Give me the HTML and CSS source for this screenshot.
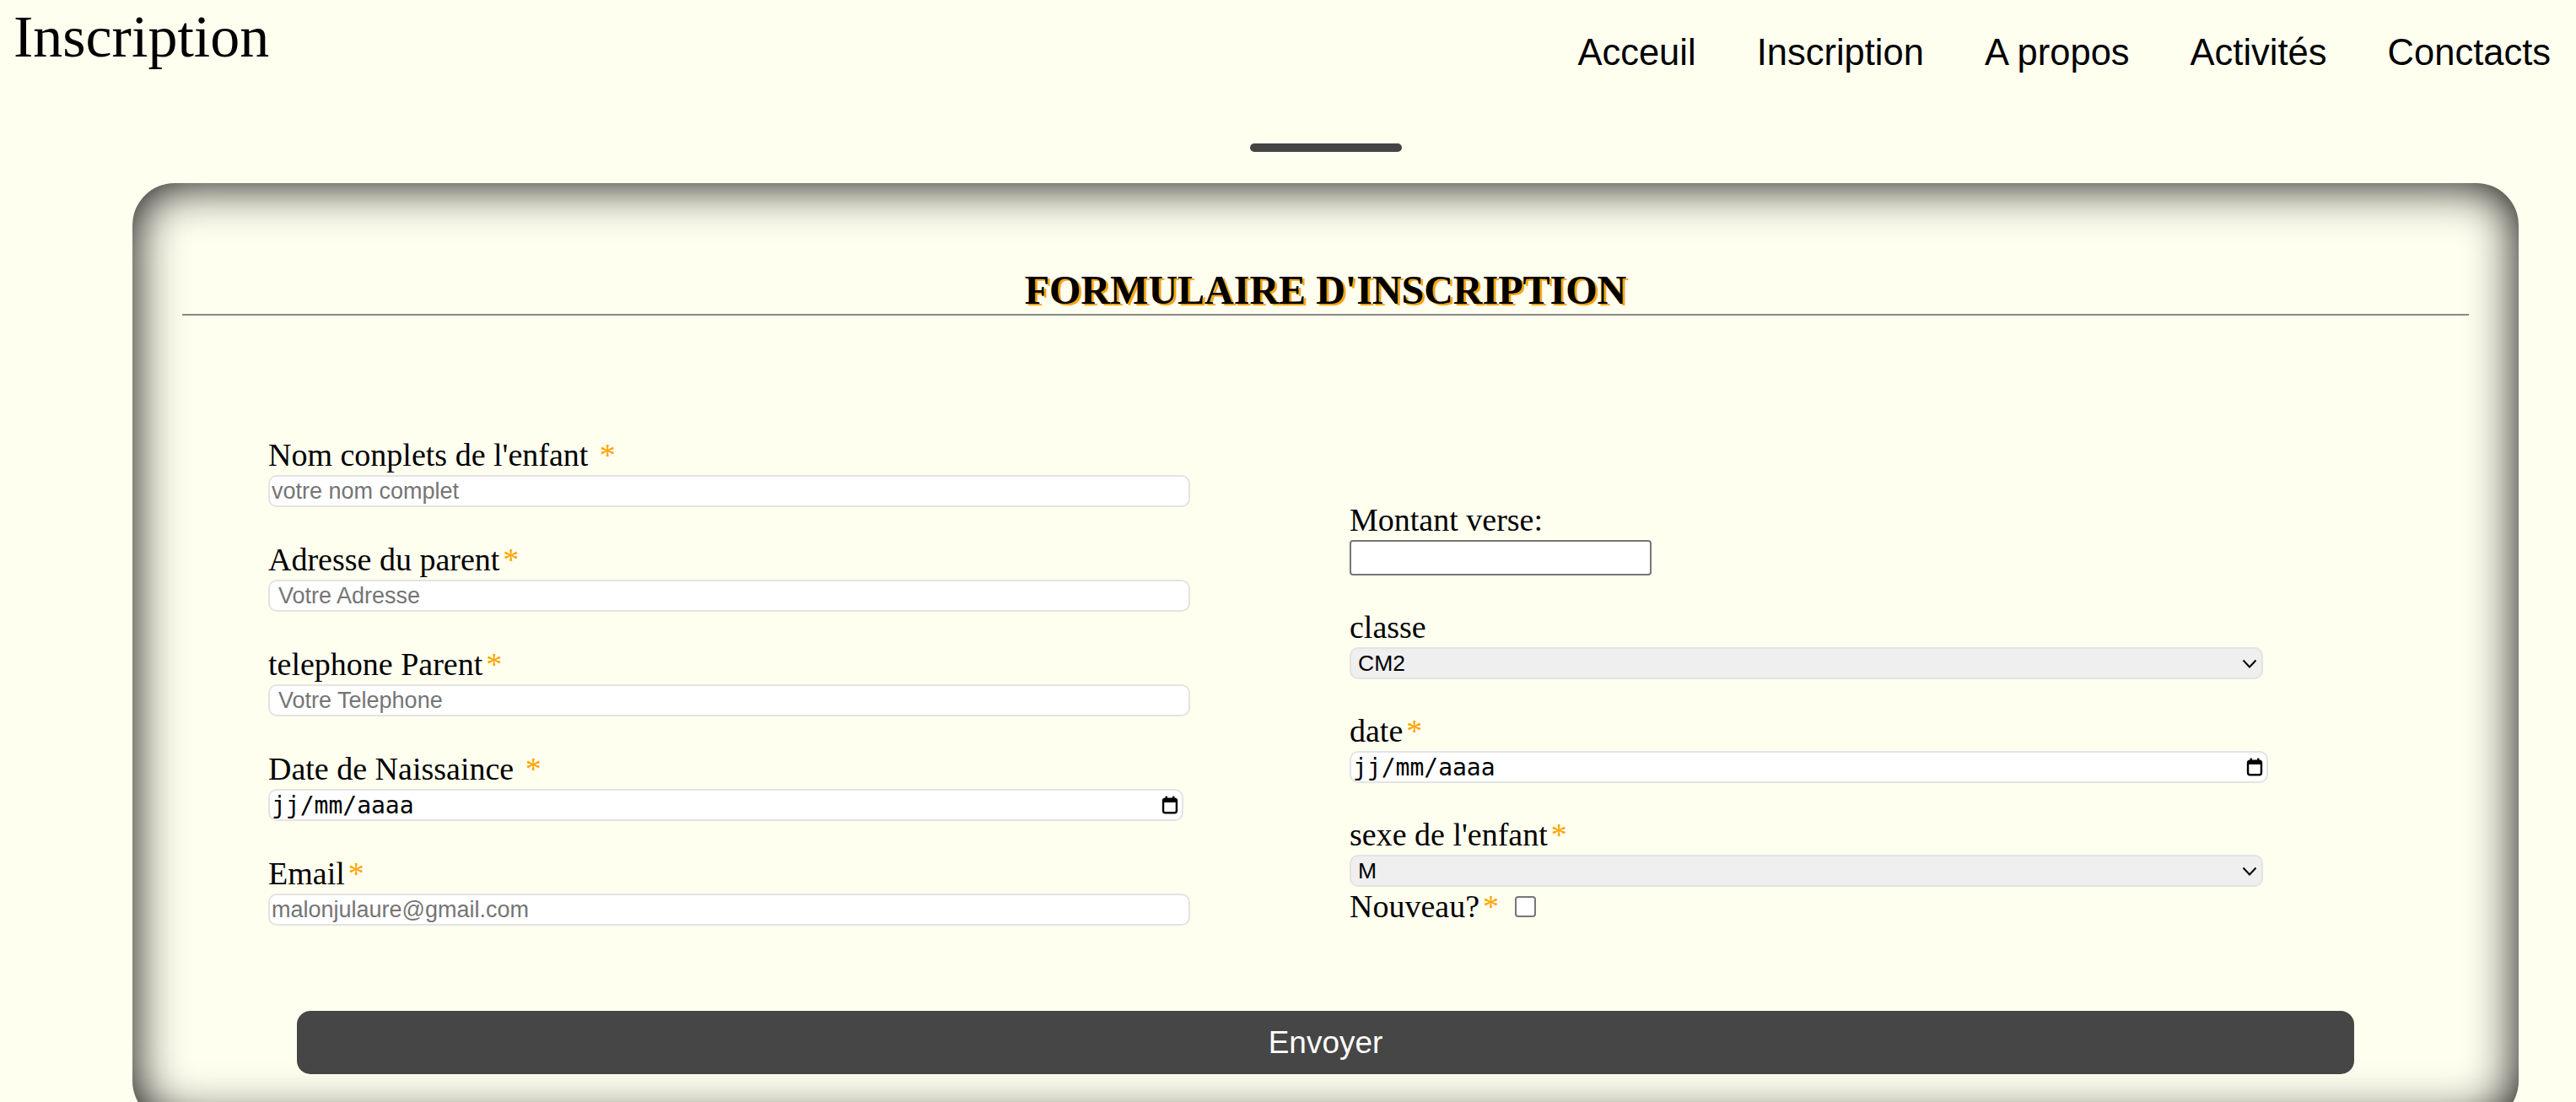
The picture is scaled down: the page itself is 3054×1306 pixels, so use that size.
FILE: index.html
```html
<!DOCTYPE html>
<html lang="fr">
<head>
<meta charset="utf-8">
<title>Inscription</title>
<link rel="stylesheet" href="styles.css">
</head>
<body>
<header class="site-header">
  <h1 class="site-title">Inscription</h1>
  <nav class="site-nav">
    <a href="#">Acceuil</a>
    <a href="#">Inscription</a>
    <a href="#">A propos</a>
    <a href="#">Activités</a>
    <a href="#">Conctacts</a>
  </nav>
</header>
<main class="main">
  <div class="divider"></div>
  <section class="card">
    <h2 class="card-title">FORMULAIRE D'INSCRIPTION</h2>
    <form class="form">
      <div class="form-grid">
        <div class="col col-left">
          <div class="group">
            <label class="label">Nom conplets de l'enfant <span class="req">*</span></label>
            <input class="field" type="text" placeholder="votre nom complet">
          </div>
          <div class="group">
            <label class="label">Adresse du parent<span class="req">*</span></label>
            <input class="field pad-l" type="text" placeholder="Votre Adresse">
          </div>
          <div class="group">
            <label class="label">telephone Parent<span class="req">*</span></label>
            <input class="field pad-l" type="text" placeholder="Votre Telephone">
          </div>
          <div class="group">
            <label class="label">Date de Naissaince <span class="req">*</span></label>
            <div class="date-field date-left">
              <span class="date-text">jj/mm/aaaa</span>
              <svg class="cal" viewBox="0 0 16 18" width="20" height="22"><rect x="1.5" y="3" width="13" height="13.5" rx="2" fill="none" stroke="#000" stroke-width="2"/><rect x="1.5" y="3" width="13" height="3.5" fill="#000"/><rect x="3.5" y="0.5" width="2" height="4" fill="#000"/><rect x="10.5" y="0.5" width="2" height="4" fill="#000"/></svg>
            </div>
          </div>
          <div class="group">
            <label class="label">Email<span class="req">*</span></label>
            <input class="field" type="email" placeholder="malonjulaure@gmail.com">
          </div>
        </div>
        <div class="col col-right">
          <div class="group">
            <label class="label">Montant verse:</label>
            <input class="native" type="text">
          </div>
          <div class="group">
            <label class="label">classe</label>
            <div class="select-wrap">
              <select class="select"><option>CM2</option></select>
              <svg class="chevron" viewBox="0 0 18 11" width="18" height="11"><polyline points="1.5,1.5 9,9.5 16.5,1.5" fill="none" stroke="#000" stroke-width="2"/></svg>
            </div>
          </div>
          <div class="group">
            <label class="label">date<span class="req">*</span></label>
            <div class="date-field date-right">
              <span class="date-text">jj/mm/aaaa</span>
              <svg class="cal" viewBox="0 0 16 18" width="20" height="22"><rect x="1.5" y="3" width="13" height="13.5" rx="2" fill="none" stroke="#000" stroke-width="2"/><rect x="1.5" y="3" width="13" height="3.5" fill="#000"/><rect x="3.5" y="0.5" width="2" height="4" fill="#000"/><rect x="10.5" y="0.5" width="2" height="4" fill="#000"/></svg>
            </div>
          </div>
          <div class="group">
            <label class="label">sexe de l'enfant<span class="req">*</span></label>
            <div class="select-wrap">
              <select class="select"><option>M</option><option>F</option></select>
              <svg class="chevron" viewBox="0 0 18 11" width="18" height="11"><polyline points="1.5,1.5 9,9.5 16.5,1.5" fill="none" stroke="#000" stroke-width="2"/></svg>
            </div>
            <div class="check-line"><span>Nouveau?</span><span class="req">*</span><input class="check" type="checkbox"></div>
          </div>
        </div>
      </div>
      <button class="submit" type="button">Envoyer</button>
    </form>
  </section>
</main>
</body>
</html>
```

FILE: styles.css
```css
* {
  box-sizing: border-box;
}

html,
body {
  margin: 0;
  padding: 0;
}

body {
  background: #fffff0;
  color: #000;
  font-family: "Liberation Serif", "Times New Roman", serif;
}

.site-header {
  display: flex;
  justify-content: space-between;
  align-items: flex-start;
  padding: 0 30px 0 16px;
}

.site-title {
  margin: 4px 0 0;
  font-size: 70px;
  line-height: 80px;
  font-weight: normal;
}

.site-nav {
  display: flex;
  gap: 72px;
  margin-top: 37px;
}

.site-nav a {
  font-family: "Liberation Sans", Arial, sans-serif;
  font-size: 43.5px;
  line-height: 50px;
  color: #000;
  text-decoration: none;
}

.main {
  margin: 0 68px 0 157px;
}

.divider {
  width: 180px;
  height: 10px;
  margin: 83px auto 0;
  border-radius: 5px;
  background: #444;
}

.card {
  margin-top: 37px;
  padding: 99px 59px 58px;
  border-radius: 50px;
  background: #fffff0;
  box-shadow: inset 0 0 60px #000;
}

.card-title {
  margin: 0;
  font-size: 48px;
  line-height: 56px;
  font-weight: bold;
  text-align: center;
  text-shadow: 3px 2px #ffa500;
  border-bottom: 2px solid #888;
}

.form {
  margin: 142px 0 0;
}

.form-grid {
  display: grid;
  grid-template-columns: 1093px 1089px;
  column-gap: 189px;
  align-items: start;
  margin-left: 102px;
}

.col-right {
  padding-top: 77px;
}

.group {
  display: flex;
  flex-direction: column;
  align-items: flex-start;
}

.col-left .group + .group {
  margin-top: 39px;
}

.col-right .group + .group {
  margin-top: 38px;
}

.label,
.check-line {
  font-size: 38px;
  line-height: 47px;
}

.req {
  color: #ffa500;
  margin-left: 4px;
}

.field {
  width: 1093px;
  height: 38px;
  padding: 0 2px;
  border: 2px solid #e3e3e3;
  border-radius: 10px;
  background: #fff;
  color: #000;
  font-family: "Liberation Sans", Arial, sans-serif;
  font-size: 27px;
  outline: none;
}

.field.pad-l {
  padding-left: 10px;
}

.field::placeholder {
  color: #757575;
}

.native {
  width: 358px;
  height: 42px;
  padding: 2px 4px;
  border: 2px solid #767676;
  border-radius: 4px;
  background: #fff;
  font-family: "Liberation Sans", Arial, sans-serif;
  font-size: 26px;
}

.date-field {
  display: flex;
  align-items: center;
  justify-content: space-between;
  height: 38px;
  padding: 0 4px 0 2px;
  border: 2px solid #e3e3e3;
  border-radius: 10px;
  background: #fff;
  font-family: "DejaVu Sans Mono", "Liberation Mono", monospace;
  font-size: 28px;
}

.date-left {
  width: 1085px;
}

.date-right {
  width: 1089px;
}

.cal {
  display: block;
}

.select-wrap {
  position: relative;
  width: 1083px;
}

.select {
  display: block;
  width: 100%;
  height: 38px;
  padding: 0 8px;
  appearance: none;
  -webkit-appearance: none;
  border: 2px solid #e3e3e3;
  border-radius: 10px;
  background: #efefef;
  color: #000;
  font-family: "Liberation Sans", Arial, sans-serif;
  font-size: 26.5px;
}

.chevron {
  position: absolute;
  right: 7px;
  top: 14px;
  pointer-events: none;
}

.check {
  appearance: none;
  -webkit-appearance: none;
  width: 25px;
  height: 25px;
  margin: 0 0 0 19px;
  border: 2px solid #767676;
  border-radius: 4px;
  background: #fff;
  vertical-align: baseline;
}

.submit {
  display: block;
  width: 90%;
  height: 75px;
  margin: 100px auto 0;
  border: none;
  border-radius: 16px;
  background: #464646;
  color: #fff;
  font-family: "Liberation Sans", Arial, sans-serif;
  font-size: 37px;
}
```
